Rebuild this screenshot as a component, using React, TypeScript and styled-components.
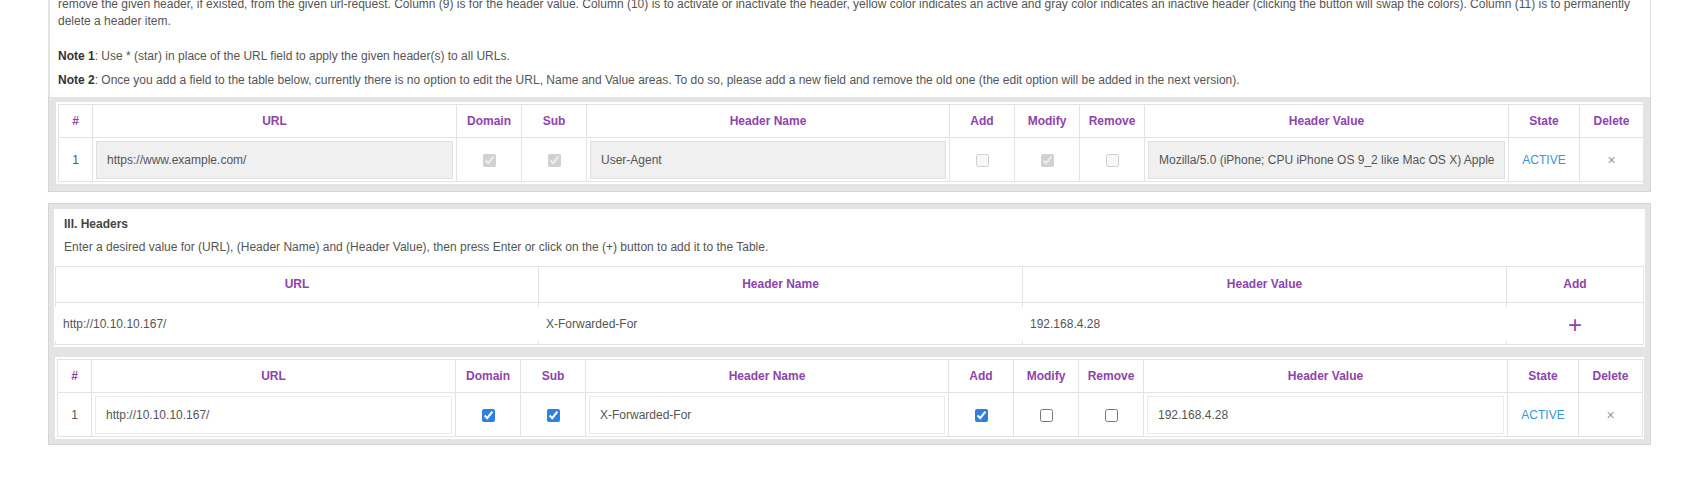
import React from "react";
import styled, { createGlobalStyle } from "styled-components";

const GlobalStyle = createGlobalStyle`
  html, body { margin: 0; padding: 0; background: #ffffff; }
  body {
    font-family: "Liberation Sans", Arial, sans-serif;
    font-size: 12px;
    color: #555555;
    overflow: hidden;
  }
  * { box-sizing: border-box; }
`;

const Page = styled.div`
  width: 1603px;
  margin-left: 48px;
  display: flex;
  flex-direction: column;
`;

const Intro = styled.div`
  margin-top: -4px;
  background: #ffffff;
  border-left: 2px solid #e2e2e2;
  border-right: 1px solid #e2e2e2;
  padding: 0 10px 8px 8px;
  line-height: 17px;
`;

const Para = styled.p<{ $gap: number }>`
  margin: 0 0 ${(p) => p.$gap}px;
`;

const Strong = styled.b`
  color: #333333;
`;

const Tray = styled.div`
  background: #e4e4e4;
  border: 1px solid #d6d6d6;
  border-top: none;
  padding: 5px 6px 7px;
`;

const Panel = styled.div`
  margin-top: 11px;
  background: #e4e4e4;
  border: 1px solid #d6d6d6;
  padding: 5px 5px 5px;
`;

const WhiteBox = styled.div`
  background: #ffffff;
  padding: 7px 1px 2px;
  line-height: 17px;
`;

const Title = styled.div`
  font-weight: bold;
  color: #444444;
  padding: 0 9px;
  margin-bottom: 6px;
`;

const Desc = styled.div`
  padding: 0 9px;
  margin-bottom: 10px;
`;

const TableFrame = styled.div<{ $top?: number }>`
  background: #ffffff;
  padding: 2px;
  margin: ${(p) => p.$top ?? 0}px 1px 0;
`;

const Table = styled.table`
  width: 100%;
  border-collapse: collapse;
  table-layout: fixed;
`;

const Col = styled.col<{ $w: number }>`
  width: ${(p) => p.$w}px;
`;

const Th = styled.th`
  height: 33px;
  padding: 0 4px;
  border: 1px solid #e3e3e3;
  color: #8e44ad;
  font-weight: bold;
  font-size: 12px;
  text-align: center;
  vertical-align: middle;
`;

const Td = styled.td<{ $align?: string }>`
  height: 44px;
  padding: 2px 3px 2px;
  border: 1px solid #e3e3e3;
  text-align: ${(p) => p.$align ?? "center"};
  vertical-align: middle;
  color: #555555;
`;

const Field = styled.input<{ $muted?: boolean }>`
  display: block;
  width: 100%;
  height: 38px;
  padding: 0 10px;
  border: 1px solid ${(p) => (p.$muted ? "#e0e0e0" : "#ebebeb")};
  background: ${(p) => (p.$muted ? "#f0f0f0" : "#ffffff")};
  color: #555555;
  font-family: "Liberation Sans", Arial, sans-serif;
  font-size: 12px;
  outline: none;
`;

const Check = styled.input`
  margin: 1px 0 0;
  width: 13px;
  height: 13px;
  accent-color: #2f7fe0;
  vertical-align: middle;
`;

const StateText = styled.span`
  color: #3498db;
  font-size: 12px;
`;

const DeleteMark = styled.span`
  color: #9a9a9a;
  font-size: 14px;
`;

const EntryTable = styled.table`
  width: 100%;
  border-collapse: collapse;
  table-layout: fixed;
`;

const EntryTh = styled.th`
  height: 36px;
  border: 1px solid #e3e3e3;
  color: #8e44ad;
  font-weight: bold;
  font-size: 12px;
  text-align: center;
`;

const EntryTd = styled.td`
  height: 42px;
  padding: 0;
  border: 1px solid #e3e3e3;
  vertical-align: middle;
  text-align: center;
`;

const EntryField = styled.input`
  position: relative;
  display: block;
  width: calc(100% + 2px);
  margin: 0 -1px;
  height: 34px;
  padding: 0 8px;
  border: none;
  background: #ffffff;
  color: #555555;
  font-family: "Liberation Sans", Arial, sans-serif;
  font-size: 12px;
  outline: none;
`;

const PlusButton = styled.span`
  color: #8e44ad;
  font-size: 24px;
  line-height: 24px;
  position: relative;
  top: 2px;
`;

type Row = {
  url: string;
  domain: boolean;
  sub: boolean;
  name: string;
  add: boolean;
  modify: boolean;
  remove: boolean;
  value: string;
  state: string;
};

const widths = [34, 364, 65, 65, 363, 65, 65, 65, 364, 71, 64];
const heads = ["#", "URL", "Domain", "Sub", "Header Name", "Add", "Modify", "Remove", "Header Value", "State", "Delete"];

function HeaderTable({ row, locked, top }: { row: Row; locked: boolean; top?: number }) {
  return (
    <TableFrame $top={top}>
      <Table>
        <colgroup>
          {widths.map((w, i) => (
            <Col key={i} $w={w} />
          ))}
        </colgroup>
        <thead>
          <tr>
            {heads.map((h) => (
              <Th key={h}>{h}</Th>
            ))}
          </tr>
        </thead>
        <tbody>
          <tr>
            <Td>1</Td>
            <Td>
              <Field $muted={locked} readOnly value={row.url} />
            </Td>
            <Td>
              <Check type="checkbox" checked={row.domain} disabled={locked} readOnly />
            </Td>
            <Td>
              <Check type="checkbox" checked={row.sub} disabled={locked} readOnly />
            </Td>
            <Td>
              <Field $muted={locked} readOnly value={row.name} />
            </Td>
            <Td>
              <Check type="checkbox" checked={row.add} disabled={locked} readOnly />
            </Td>
            <Td>
              <Check type="checkbox" checked={row.modify} disabled={locked} readOnly />
            </Td>
            <Td>
              <Check type="checkbox" checked={row.remove} disabled={locked} readOnly />
            </Td>
            <Td>
              <Field $muted={locked} readOnly value={row.value} />
            </Td>
            <Td>
              <StateText>{row.state}</StateText>
            </Td>
            <Td>
              <DeleteMark>×</DeleteMark>
            </Td>
          </tr>
        </tbody>
      </Table>
    </TableFrame>
  );
}

const savedRow: Row = {
  url: "https://www.example.com/",
  domain: true,
  sub: true,
  name: "User-Agent",
  add: false,
  modify: true,
  remove: false,
  value:
    "Mozilla/5.0 (iPhone; CPU iPhone OS 9_2 like Mac OS X) AppleWebKit/601.1.46 (KHTML, like Gecko) Version/9.0 Mobile/13C75 Safari/601.1",
  state: "ACTIVE",
};

const newRow: Row = {
  url: "http://10.10.10.167/",
  domain: true,
  sub: true,
  name: "X-Forwarded-For",
  add: true,
  modify: false,
  remove: false,
  value: "192.168.4.28",
  state: "ACTIVE",
};

export default function App() {
  return (
    <>
      <GlobalStyle />
      <Page>
        <Intro>
          <Para $gap={18}>
            remove the given header, if existed, from the given url-request. Column (9) is for the header value. Column (10) is to
            activate or inactivate the header, yellow color indicates an active and gray color indicates an inactive header (clicking the
            button will swap the colors). Column (11) is to permanently
            <br />
            delete a header item.
          </Para>
          <Para $gap={7}>
            <Strong>Note 1</Strong>: Use * (star) in place of the URL field to apply the given header(s) to all URLs.
          </Para>
          <Para $gap={0}>
            <Strong>Note 2</Strong>: Once you add a field to the table below, currently there is no option to edit the URL, Name and
            Value areas. To do so, please add a new field and remove the old one (the edit option will be added in the next version).
          </Para>
        </Intro>
        <Tray>
          <HeaderTable row={savedRow} locked />
        </Tray>
        <Panel>
          <WhiteBox>
            <Title>III. Headers</Title>
            <Desc>
              Enter a desired value for (URL), (Header Name) and (Header Value), then press Enter or click on the (+) button to add it to
              the Table.
            </Desc>
            <EntryTable>
              <colgroup>
                <Col $w={483} />
                <Col $w={484} />
                <Col $w={484} />
                <Col $w={137} />
              </colgroup>
              <thead>
                <tr>
                  <EntryTh>URL</EntryTh>
                  <EntryTh>Header Name</EntryTh>
                  <EntryTh>Header Value</EntryTh>
                  <EntryTh>Add</EntryTh>
                </tr>
              </thead>
              <tbody>
                <tr>
                  <EntryTd>
                    <EntryField readOnly value="http://10.10.10.167/" />
                  </EntryTd>
                  <EntryTd>
                    <EntryField readOnly value="X-Forwarded-For" />
                  </EntryTd>
                  <EntryTd>
                    <EntryField readOnly value="192.168.4.28" />
                  </EntryTd>
                  <EntryTd>
                    <PlusButton>+</PlusButton>
                  </EntryTd>
                </tr>
              </tbody>
            </EntryTable>
          </WhiteBox>
          <HeaderTable row={newRow} locked={false} top={10} />
        </Panel>
      </Page>
    </>
  );
}
